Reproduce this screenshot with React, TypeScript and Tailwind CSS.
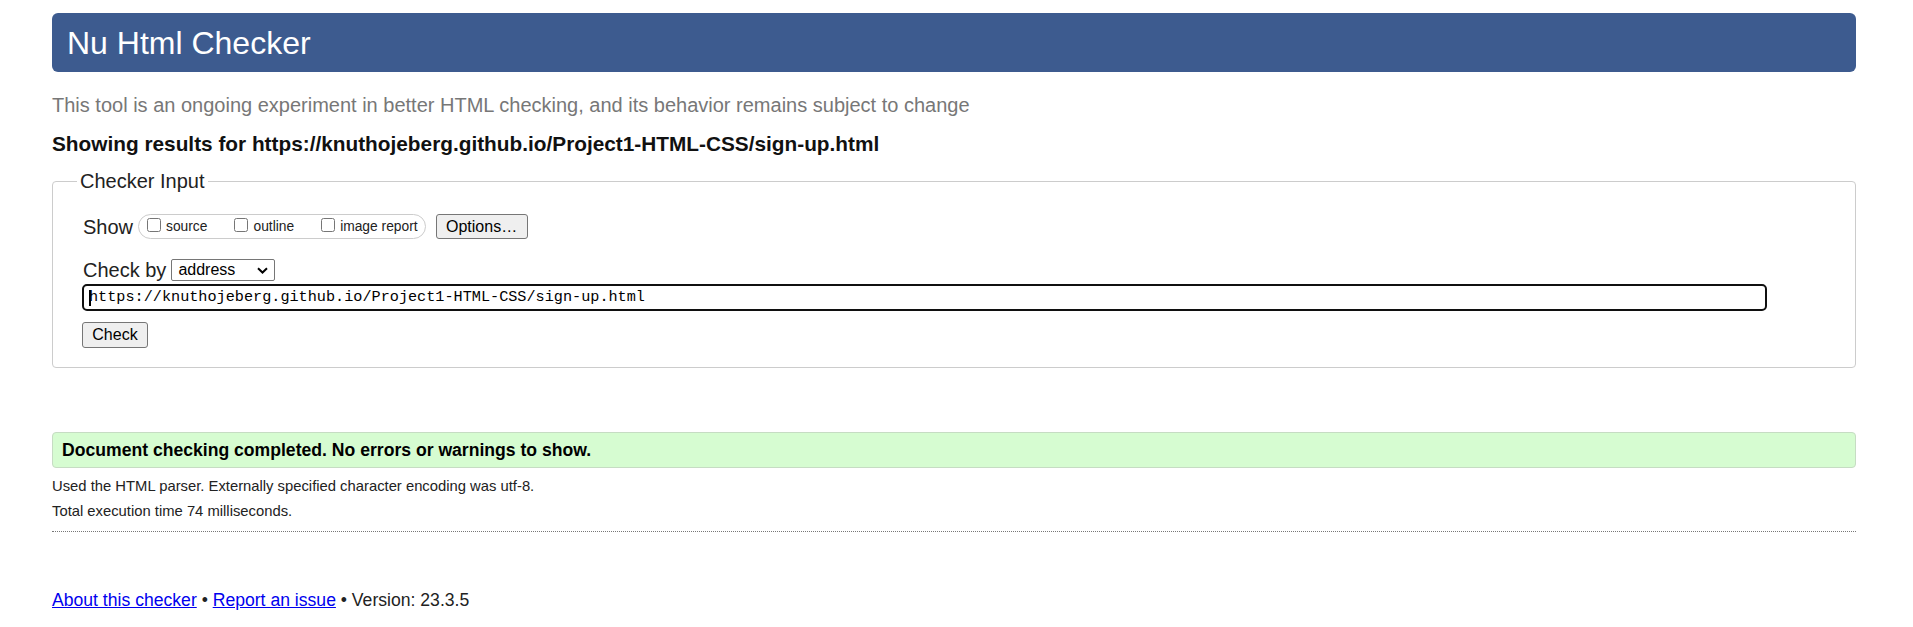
export default function App() {
  const url = 'https://knuthojeberg.github.io/Project1-HTML-CSS/sign-up.html'

  return (
    <div className="min-h-screen bg-white text-[#222] font-['Liberation_Sans',Arial,sans-serif] pl-[52px] pr-[57px] pt-[13px]">

      {/* Header */}
      <div className="h-[59px] rounded-[6px] bg-[#3d5b8f] flex items-center pl-[15px]">
        <h1 className="text-white text-[32px] leading-none">Nu Html Checker</h1>
      </div>

      <p className="mt-[22px] text-[20px] leading-[23px] text-[#777]">
        This tool is an ongoing experiment in better HTML checking, and its behavior remains subject to change
      </p>

      <h2 className="mt-[15px] text-[20.8px] leading-[24px] font-bold text-[#111]">
        Showing results for {url}
      </h2>

      {/* Checker input */}
      <fieldset className="mt-[14px] border border-[#ccc] rounded-[4px] pl-[30px] pb-[19px]">
        <legend className="-ml-[6px] px-[3px] text-[20px] leading-[23px] text-[#222]">Checker Input</legend>

        <div className="mt-[21px] flex items-center h-[25px]">
          <span className="text-[20px] leading-none">Show</span>
          <div className="ml-[5px] h-[25px] rounded-full border border-[#ccc] flex items-center gap-[27px] pl-[8px] pr-[7px]">
            <Check label="source" />
            <Check label="outline" />
            <Check label="image report" />
          </div>
          <button className="ml-[10px] w-[92px] h-[25px] bg-[#efefef] border border-[#767676] rounded-[3px] text-[16px] leading-none text-black">
            Options…
          </button>
        </div>

        <div className="mt-[20px] flex items-center h-[22px]">
          <span className="text-[20px] leading-none">Check by</span>
          <div className="ml-[5px] w-[104px] h-[22px] border border-[#767676] rounded-[2px] flex items-center justify-between pl-[6px] pr-[6px] text-[16px] text-black">
            <span>address</span>
            <svg width="11" height="7" viewBox="0 0 11 7" fill="none">
              <path d="M1 1.2 L5.5 5.5 L10 1.2" stroke="#000" strokeWidth="2" />
            </svg>
          </div>
        </div>

        <div className="mt-[3px] w-[1685px] -ml-[1px] h-[27px] border-2 border-[#101010] rounded-[5px] flex items-center pl-[5px] font-['Liberation_Mono','DejaVu_Sans_Mono',monospace] text-[15.2px] text-black">
          <span className="inline-block w-[2px] h-[16px] bg-black -mr-[2px]" />
          <span>{url}</span>
        </div>

        <button className="mt-[11px] -ml-[1px] block w-[66px] h-[26px] bg-[#efefef] border border-[#767676] rounded-[3px] text-[16px] leading-none text-black">
          Check
        </button>
      </fieldset>

      {/* Result */}
      <div className="mt-[64px] h-[36px] bg-[#d6fcd1] border border-[#c6dcc3] rounded-[4px] flex items-center pl-[9px]">
        <p className="text-[17.6px] font-bold text-black">Document checking completed. No errors or warnings to show.</p>
      </div>

      <div className="mt-[6px] text-[14.8px] leading-[25px] text-[#222]">
        <p>Used the HTML parser. Externally specified character encoding was utf-8.</p>
        <p>Total execution time 74 milliseconds.</p>
      </div>

      <div className="mt-[7px] border-b border-dotted border-[#777]" />

      <p className="mt-[57px] text-[17.6px] leading-[22px] text-[#222]">
        <a href="#" className="text-[#0000ee] underline">About this checker</a>
        {' • '}
        <a href="#" className="text-[#0000ee] underline">Report an issue</a>
        {' • Version: 23.3.5'}
      </p>
    </div>
  )
}

function Check({ label }: any) {
  return (
    <label className="flex items-center text-[13.8px] leading-none text-[#222]">
      <input type="checkbox" readOnly className="w-[14px] h-[14px] m-0 mb-[3px]" />
      <span className="ml-[5px]">{label}</span>
    </label>
  )
}
